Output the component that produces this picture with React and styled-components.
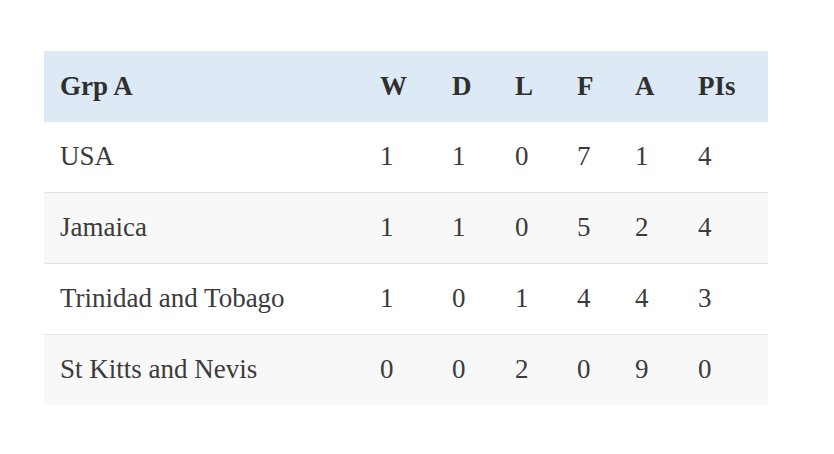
import React from "react";
import styled, { createGlobalStyle } from "styled-components";

const Global = createGlobalStyle`
  html, body { margin: 0; padding: 0; background: #ffffff; }
  body { font-family: "Liberation Serif", "Times New Roman", serif; }
`;

const Page = styled.div`
  padding: 51px 0 0 44px;
`;

const Table = styled.table`
  width: 724px;
  border-collapse: collapse;
  table-layout: fixed;
  font-family: "Liberation Serif", "Times New Roman", serif;
  font-size: 27px;
  color: #3b3b3b;
`;

const HeadRow = styled.tr`
  background: #ddeaf5;
  height: 71px;
`;

const Th = styled.th`
  text-align: left;
  font-weight: bold;
  color: #2f2f2f;
  padding: 0 0 0 16px;
  vertical-align: middle;
`;

const Row = styled.tr`
  height: ${(p) => (p.$first ? "70px" : "71px")};
  background: ${(p) => (p.$alt ? "#f8f8f8" : "#ffffff")};
  border-top: ${(p) => (p.$first ? "none" : "1px solid #e2e2e2")};
`;

const Td = styled.td`
  text-align: left;
  padding: 0 0 0 16px;
  vertical-align: middle;
  white-space: nowrap;
`;

const widths = [320, 72, 63, 62, 58, 63, 86];
const headers = ["Grp A", "W", "D", "L", "F", "A", "PIs"];
const rows = [
  ["USA", 1, 1, 0, 7, 1, 4],
  ["Jamaica", 1, 1, 0, 5, 2, 4],
  ["Trinidad and Tobago", 1, 0, 1, 4, 4, 3],
  ["St Kitts and Nevis", 0, 0, 2, 0, 9, 0],
];

export default function App() {
  return (
    <>
      <Global />
      <Page>
        <Table>
          <colgroup>
            {widths.map((w, i) => (
              <col key={i} style={{ width: w }} />
            ))}
          </colgroup>
          <thead>
            <HeadRow>
              {headers.map((h, i) => (
                <Th key={i}>{h}</Th>
              ))}
            </HeadRow>
          </thead>
          <tbody>
            {rows.map((r, ri) => (
              <Row key={ri} $alt={ri % 2 === 1} $first={ri === 0}>
                {r.map((c, ci) => (
                  <Td key={ci}>{c}</Td>
                ))}
              </Row>
            ))}
          </tbody>
        </Table>
      </Page>
    </>
  );
}
